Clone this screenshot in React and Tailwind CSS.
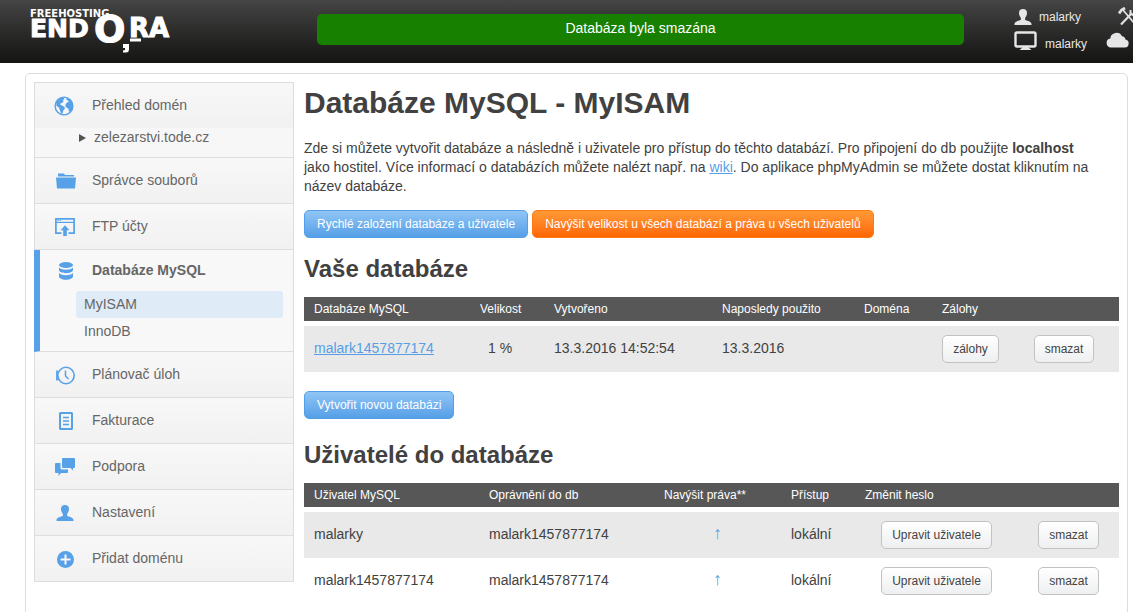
import React from 'react';

const databases = [
    { name: 'malark1457877174', size: '1 %', created: '13.3.2016 14:52:54', lastUsed: '13.3.2016', domain: '' },
];

const users = [
    { name: 'malarky', grants: 'malark1457877174', access: 'lokální' },
    { name: 'malark1457877174', grants: 'malark1457877174', access: 'lokální' },
];

const GlobeIcon = () => (
    <svg width="20" height="20" viewBox="0 0 20 20" aria-hidden="true">
        <circle cx="10" cy="10" r="8.900" fill="#f6f6f6" stroke="#56a1e8" strokeWidth="1.400" />
        <path d="M2 6l3-3.500 4.500-1 1 1.500-1.800 1.200 1 1-1.700 1.800-1.300.2-.6 1.400 2.300 1.200 2 .9.6 1.700-1.600 1.800-.8 3.300-1.200.2-1.600-3.500-.8-2.800L2.500 10z" fill="#56a1e8" />
        <path d="M12 2l3.500 1.200 2.500 3 1 4-1.200 4-1.700 1.600-1.200-.4-.6-3-1.700-.6-1.300-1.800.6-2.500 1.700-1.200 1-.3-.3-1.300-1.600-.6z" fill="#56a1e8" />
    </svg>
);

const FolderIcon = () => (
    <svg width="20" height="20" viewBox="0 0 20 20" fill="#56a1e8" aria-hidden="true">
        <path d="M2 4V2.500h6L9 4h9v1.500H2z" />
        <path d="M0 6.500h20L19 17.500H1z" />
    </svg>
);

const UploadIcon = () => (
    <svg width="20" height="20" viewBox="0 0 20 20" aria-hidden="true">
        <path d="M6.500 16.200H.9V1.900h18.200v14.300h-5.600" fill="none" stroke="#56a1e8" strokeWidth="1.700" />
        <path d="M1 5.400h18" stroke="#56a1e8" strokeWidth="1.200" />
        <path d="M2.500 3.600h1.200M4.700 3.600h1.200" stroke="#56a1e8" strokeWidth="1" />
        <path d="M10 8.300l4.500 5h-2.700V19H8.200v-5.700H5.500z" fill="#56a1e8" />
    </svg>
);

const DatabaseIcon = () => (
    <svg width="20" height="20" viewBox="0 0 20 20" fill="#56a1e8" aria-hidden="true">
        <ellipse cx="10" cy="4" rx="7" ry="3" />
        <path d="M3 6.500c1.500 1.700 4 2.200 7 2.200s5.500-.5 7-2.200v2.600c0 1.900-3.100 3.100-7 3.100s-7-1.200-7-3.100z" />
        <path d="M3 12c1.500 1.700 4 2.200 7 2.200s5.500-.5 7-2.200v3.200c0 2.100-3.100 3.600-7 3.600s-7-1.500-7-3.600z" />
    </svg>
);

const ClockIcon = () => (
    <svg width="20" height="20" viewBox="0 0 20 20" fill="none" stroke="#56a1e8" aria-hidden="true">
        <circle cx="11" cy="10.500" r="8.200" strokeWidth="1.600" />
        <path d="M10.500 5.500v5.500l3 3" strokeWidth="1.500" />
        <path d="M2 5.500v10" strokeWidth="1.800" />
    </svg>
);

const InvoiceIcon = () => (
    <svg width="20" height="20" viewBox="0 0 20 20" fill="none" stroke="#56a1e8" aria-hidden="true">
        <rect x="4" y="2" width="12" height="16" strokeWidth="2" rx=".5" />
        <path d="M7 6.500h6M7 10h6M7 13.500h6" strokeWidth="1.500" />
    </svg>
);

const ChatIcon = () => (
    <svg width="20" height="20" viewBox="0 0 20 20" fill="#56a1e8" aria-hidden="true">
        <path d="M8 1h11q1 0 1 1v8q0 1-1 1h-1v2.500L15.500 11H8q-1 0-1-1V2q0-1 1-1z" />
        <path d="M1 6h4.500v5q0 1.500 1.500 1.500h6V15q0 1-1 1H6l-2.500 3v-3H1q-1 0-1-1V7q0-1 1-1z" />
    </svg>
);

const PersonIcon = ({ className }) => (
    <svg width="18" height="18" viewBox="0 0 18 18" fill="currentColor" className={className} aria-hidden="true">
        <path d="M9 1c2.600 0 4 1.500 4 4 0 1.700-.6 3.200-1.600 4.300l-.4 2.200c.3 1.300 6.500 1.300 6.500 4.500v1H.5v-1c0-3.200 6.200-3.200 6.500-4.500l-.4-2.200C5.600 8.200 5 6.700 5 5c0-2.500 1.400-4 4-4z" />
    </svg>
);

const PlusIcon = () => (
    <svg width="20" height="20" viewBox="0 0 20 20" aria-hidden="true">
        <circle cx="9.500" cy="10.500" r="8.500" fill="#56a1e8" />
        <path d="M9.500 5.500v10M4.500 10.500h10" stroke="#f8f8f8" strokeWidth="2" />
    </svg>
);

const Logo = () => (
    <svg width="145" height="46" viewBox="0 0 145 46" role="img" aria-label="Freehosting Endora" fill="#fff" className="shrink-0">
        <g fontFamily="'DejaVu Sans', sans-serif" fontWeight="bold" stroke="#fff">
            <text x="0" y="9" fontSize="10" strokeWidth="0">FREEHOSTING</text>
            <text x="0" y="29" fontSize="25" strokeWidth="1">END</text>
            <text x="64" y="34" fontSize="37" strokeWidth="1">O</text>
            <text x="99" y="29" fontSize="26" strokeWidth="1">RA</text>
        </g>
        <path d="M93 36h6v5q0 3.500-3 3.500h-3v-2l2-.5v-2h-2z" />
        <path d="M100 30.500h11v3h-11z" />
    </svg>
);

const MonitorIcon = () => (
    <svg width="24" height="20" viewBox="0 0 24 20" aria-hidden="true">
        <rect x="1.500" y="1.500" width="20" height="14" rx="1.500" fill="none" stroke="#e6e6e6" strokeWidth="2.400" />
        <path d="M9 16h5l3.500 3h-12z" fill="#e6e6e6" />
    </svg>
);

const ToolsIcon = () => (
    <svg width="20" height="20" viewBox="0 0 20 20" fill="none" stroke="#e0e0e0" aria-hidden="true">
        <path d="M5 3l12 14" strokeWidth="1.800" />
        <path d="M1 6.500l2.500-3.500L7 1" strokeWidth="2.800" />
        <path d="M3 17.500L14 6" strokeWidth="2.200" />
        <path d="M12.500 3v4l3 1 3-1" strokeWidth="2" />
    </svg>
);

const CloudIcon = () => (
    <svg width="24" height="16" viewBox="0 0 24 16" fill="#e6e6e6" aria-hidden="true">
        <path d="M5 15.500a4.600 4.600 0 0 1-.7-9.100A6.200 6.200 0 0 1 16 4.300a4 4 0 0 1 3.500 3.300 4 4 0 0 1-.5 7.900z" />
    </svg>
);

const Header = () => (
    <header className="flex h-[63px] overflow-hidden bg-linear-to-b from-[#454545] to-[#141413] text-[12px] leading-4 text-[#e8e8e8]">
        <a href="#" className="mt-2 ml-[30px] block w-[145px] shrink-0">
            <Logo />
        </a>
        <div role="status" className="mt-3.5 ml-[142px] flex h-[31px] flex-1 items-center justify-center rounded-[5px] bg-[#178000] pb-1 text-[14px] text-white">
            Databáza byla smazána
        </div>
        <div className="ml-[50px] flex w-[119px] shrink-0 gap-[19px] overflow-hidden pt-2">
            <div className="flex flex-col gap-1">
                <a href="#" className="flex h-[18px] items-center gap-[7px]">
                    <PersonIcon className="text-[#e6e6e6]" />
                    malarky
                </a>
                <a href="#" className="flex h-[22px] items-center gap-[7px]">
                    <MonitorIcon />
                    <span className="pt-1.5">malarky</span>
                </a>
            </div>
            <div className="flex shrink-0 flex-col gap-1">
                <a href="#" aria-label="Nástroje" className="flex h-[18px] items-center pl-3">
                    <ToolsIcon />
                </a>
                <a href="#" aria-label="Cloud" className="flex h-5 items-center">
                    <CloudIcon />
                </a>
            </div>
        </div>
    </header>
);

const MenuItem = ({ icon, label }) => (
    <li className="border-b border-[#ddd] bg-linear-to-b from-[#f8f8f8] to-[#f1f1f1] last:border-b-0">
        <a href="#" className="flex h-[45px] items-center pl-5">
            <span className="flex w-[37px] shrink-0">{icon}</span>
            <span className="pb-0.5">{label}</span>
        </a>
    </li>
);

const Sidebar = () => (
    <nav className="w-[260px] shrink-0 self-start border border-[#ddd] text-[14px] leading-[18px] text-[#666]">
        <ul>
            <li className="border-b border-[#ddd] bg-[#f7f7f7]">
                <a href="#" className="flex h-[45px] items-center bg-linear-to-b from-[#f8f8f8] to-[#f1f1f1] pl-[19px]">
                    <span className="flex w-[38px] shrink-0"><GlobeIcon /></span>
                    <span className="pb-0.5">Přehled domén</span>
                </a>
                <a href="#" className="flex h-[29px] items-start gap-2 pl-11">
                    <svg width="7" height="8" viewBox="0 0 7 8" fill="#555" className="mt-1.5" aria-hidden="true">
                        <path d="M0 0l7 4-7 4z" />
                    </svg>
                    zelezarstvi.tode.cz
                </a>
            </li>
            <MenuItem icon={<span className="pl-px"><FolderIcon /></span>} label="Správce souborů" />
            <MenuItem icon={<UploadIcon />} label="FTP účty" />
            <li className="-ml-px border-b border-l-6 border-b-[#ddd] border-l-[#56a1e8] bg-[#f8f8f8] pr-2.5 pb-[7px]">
                <a href="#" className="flex h-[41px] items-center pl-4 font-bold">
                    <span className="flex w-9 shrink-0"><DatabaseIcon /></span>
                    <span className="pb-0.5">Databáze MySQL</span>
                </a>
                <ul className="pl-9">
                    <li><a href="#" className="flex h-[27px] items-center rounded-[3px] bg-[#dfebf7] pb-0.5 pl-2">MyISAM</a></li>
                    <li><a href="#" className="flex h-[26px] items-center pl-2">InnoDB</a></li>
                </ul>
            </li>
            <MenuItem icon={<ClockIcon />} label="Plánovač úloh" />
            <MenuItem icon={<span className="pl-px"><InvoiceIcon /></span>} label="Fakturace" />
            <MenuItem icon={<ChatIcon />} label="Podpora" />
            <MenuItem icon={<PersonIcon className="ml-px text-[#56a1e8]" />} label="Nastavení" />
            <MenuItem icon={<span className="pl-px"><PlusIcon /></span>} label="Přidat doménu" />
        </ul>
    </nav>
);

const buttonColors = {
    blue: 'border-[#529fe8] from-[#90c5f5] to-[#559fe7] px-3 text-white',
    orange: 'border-[#ff7a12] from-[#ff9a35] to-[#ff6500] px-3 text-white',
    white: 'border-[#c2c2c2] from-white to-[#eeeff0] px-2.5 text-[#444]',
};

const Button = ({ color = 'white', children }) => (
    <button type="button" className={`h-7 rounded-[5px] border bg-linear-to-b text-[12px] leading-4 whitespace-nowrap ${buttonColors[color]}`}>
        {children}
    </button>
);

const Th = ({ className = '', children }) => (
    <th className={`h-[29px] border-b-5 border-white bg-[#575757] px-2.5 text-left text-[12px] leading-4 font-normal whitespace-nowrap text-white ${className}`}>
        {children}
    </th>
);

const Td = ({ className = 'px-2.5', children }) => (
    <td className={`pb-0.5 ${className}`}>{children}</td>
);

const DatabaseTable = () => (
    <table className="w-full table-fixed border-separate border-spacing-0 text-[14px] leading-[19px]">
        <thead>
            <tr>
                <Th className="w-[166px]">Databáze MySQL</Th>
                <Th className="w-[74px]">Velikost</Th>
                <Th className="w-[168px]">Vytvořeno</Th>
                <Th className="w-[142px]">Naposledy použito</Th>
                <Th className="w-[78px]">Doména</Th>
                <Th className="w-[77px]">Zálohy</Th>
                <Th />
            </tr>
        </thead>
        <tbody>
            {databases.map((db) => (
                <tr key={db.name} className="h-[46px] odd:bg-[#e9e9e9]">
                    <Td><a href="#" className="text-[#569fe6] underline">{db.name}</a></Td>
                    <Td className="pl-[18px]">{db.size}</Td>
                    <Td>{db.created}</Td>
                    <Td>{db.lastUsed}</Td>
                    <Td>{db.domain}</Td>
                    <td className="text-center"><Button>zálohy</Button></td>
                    <td className="text-center"><Button>smazat</Button></td>
                </tr>
            ))}
        </tbody>
    </table>
);

const UserTable = () => (
    <table className="w-full table-fixed border-separate border-spacing-0 text-[14px] leading-[19px]">
        <thead>
            <tr>
                <Th className="w-[175px]">Uživatel MySQL</Th>
                <Th className="w-[175px]">Oprávnění do db</Th>
                <Th className="w-[127px]">Navýšit práva**</Th>
                <Th className="w-[74px]">Přístup</Th>
                <Th className="w-[163px]">Změnit heslo</Th>
                <Th />
            </tr>
        </thead>
        <tbody>
            {users.map((user) => (
                <tr key={user.name} className="h-[46px] odd:bg-[#e9e9e9]">
                    <Td>{user.name}</Td>
                    <Td>{user.grants}</Td>
                    <Td className="text-center"><a href="#" className="text-[18px] text-[#569fe6]">↑</a></Td>
                    <Td>{user.access}</Td>
                    <td className="text-center"><Button>Upravit uživatele</Button></td>
                    <td className="text-center"><Button>smazat</Button></td>
                </tr>
            ))}
        </tbody>
    </table>
);

const App = () => {
    return (
        <div className="bg-white font-['Liberation_Sans',Arial,sans-serif] text-[#414141]">
            <Header />
            <div className="mt-2.5 mr-[5px] ml-[25px] flex gap-2.5 rounded-[5px] border border-[#ddd] p-2 pb-12">
                <Sidebar />
                <main className="min-w-0 flex-1">
                    <h1 className="pt-1 text-[30px] leading-[34px] font-bold">Databáze MySQL - MyISAM</h1>
                    <p className="mt-[19px] pr-6 text-[14px] leading-[19px]">
                        Zde si můžete vytvořit databáze a následně i uživatele pro přístup do těchto databází. Pro připojení do db použijte <strong>localhost</strong> jako hostitel. Více informací o databázích můžete nalézt např. na <a href="#" className="text-[#569fe6] underline">wiki</a>. Do aplikace phpMyAdmin se můžete dostat kliknutím na název databáze.
                    </p>
                    <div className="mt-3.5 flex gap-1">
                        <Button color="blue">Rychlé založení databáze a uživatele</Button>
                        <Button color="orange">Navýšit velikost u všech databází a práva u všech uživatelů</Button>
                    </div>
                    <h2 className="mt-4 mb-3.5 text-[24px] leading-[29px] font-bold">Vaše databáze</h2>
                    <DatabaseTable />
                    <div className="mt-[19px] flex">
                        <Button color="blue">Vytvořit novou databázi</Button>
                    </div>
                    <h2 className="mt-[21px] mb-3.5 text-[24px] leading-[29px] font-bold">Uživatelé do databáze</h2>
                    <UserTable />
                </main>
            </div>
        </div>
    );
};

export default App;
